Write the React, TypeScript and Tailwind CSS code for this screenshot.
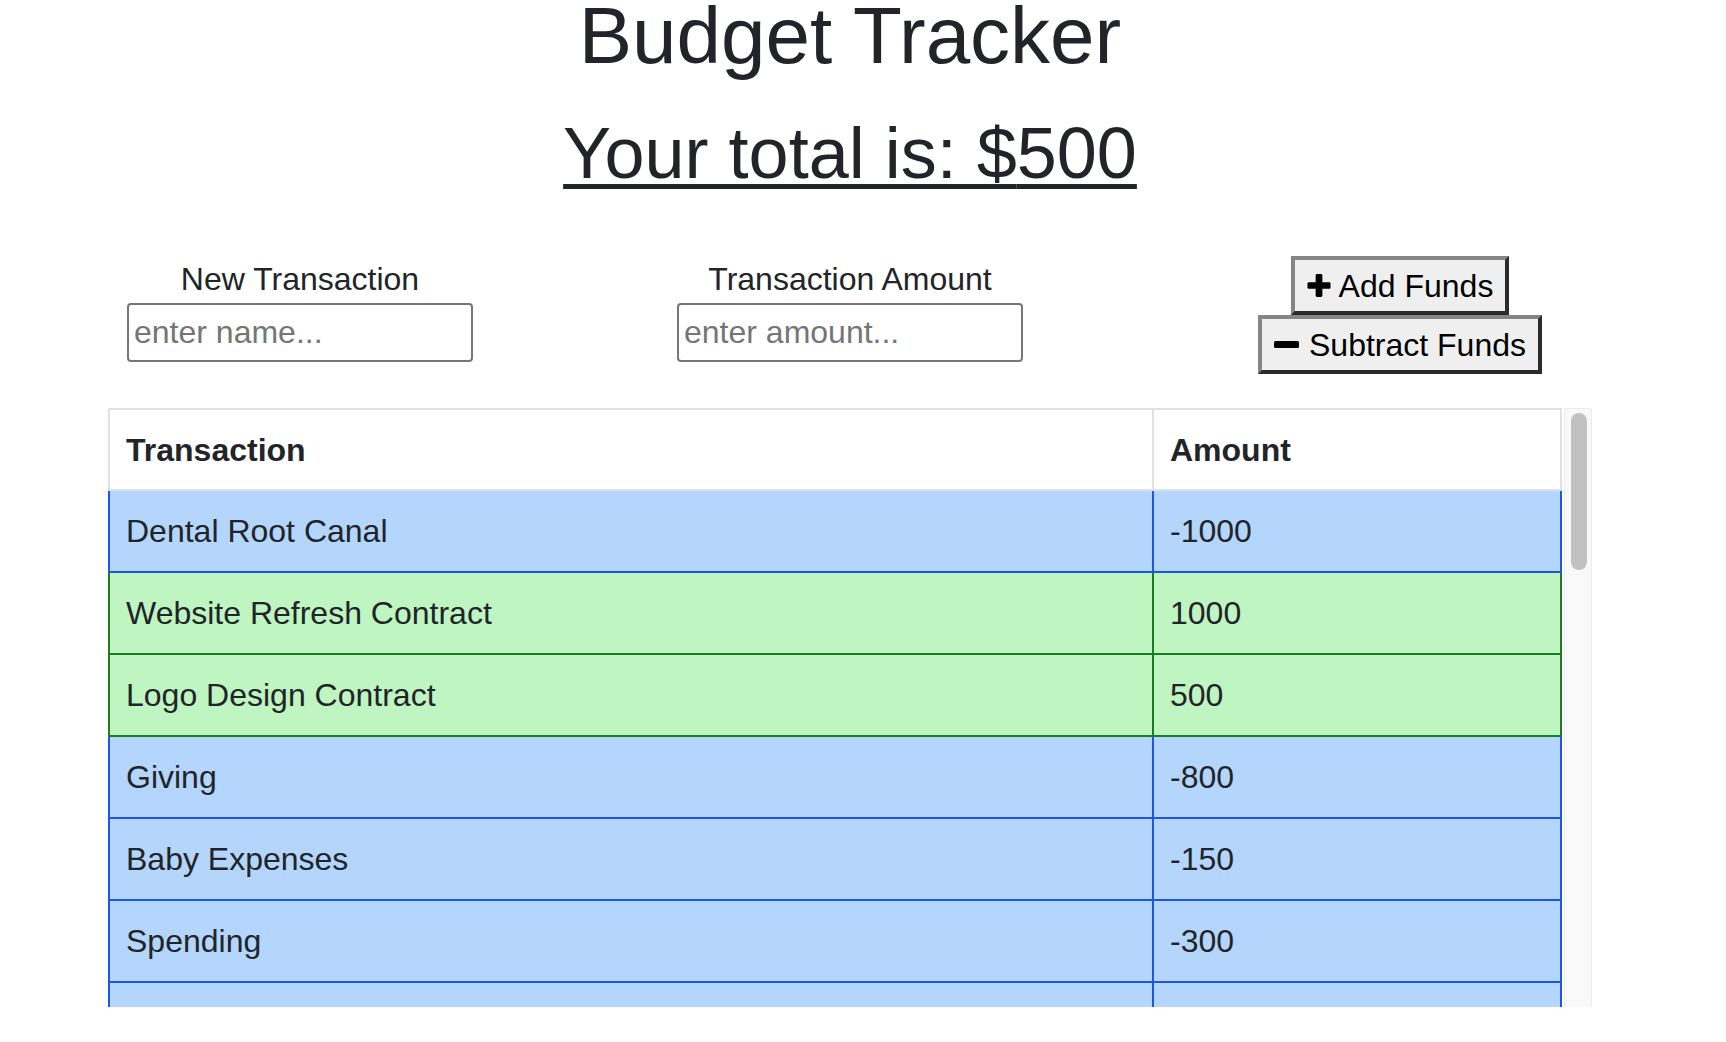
import { useState } from "react";

type Entry = { name: string; amount: number };

const entries: Entry[] = [
  { name: "Dental Root Canal", amount: -1000 },
  { name: "Website Refresh Contract", amount: 1000 },
  { name: "Logo Design Contract", amount: 500 },
  { name: "Giving", amount: -800 },
  { name: "Baby Expenses", amount: -150 },
  { name: "Spending", amount: -300 },
];

function PlusIcon() {
  return (
    <svg viewBox="0 0 24 24" className="h-[23px] w-[24px]" fill="currentColor">
      <rect x="0" y="8.5" width="24" height="7" rx="1.5" />
      <rect x="8.5" y="0" width="7" height="24" rx="1.5" />
    </svg>
  );
}

function MinusIcon() {
  return (
    <svg viewBox="0 0 25 7" className="h-[7px] w-[25px]" fill="currentColor">
      <rect x="0" y="0" width="25" height="7" rx="1.5" />
    </svg>
  );
}

function Row({ entry }: { entry?: Entry }) {
  const income = !!entry && entry.amount > 0;
  return (
    <div
      className={
        income
          ? "flex h-[82px] shrink-0 border-x-2 border-b-2 border-[#1c7c21] bg-[#bff5c1]"
          : "flex h-[82px] shrink-0 border-x-2 border-b-2 border-[#1b57e3] bg-[#b4d5fc]"
      }
    >
      <div
        className={
          income
            ? "flex w-[1044px] items-center border-r-2 border-[#1c7c21] px-[16px] leading-[48px]"
            : "flex w-[1044px] items-center border-r-2 border-[#1b57e3] px-[16px] leading-[48px]"
        }
      >
        {entry?.name}
      </div>
      <div className="flex flex-1 items-center px-[16px] leading-[48px]">{entry?.amount}</div>
    </div>
  );
}

export default function App() {
  const [name, setName] = useState("");
  const [amount, setAmount] = useState("");
  const total = 500;

  return (
    <div className="w-[1700px] font-['Liberation_Sans',Arial,sans-serif] text-[#212529]">
      <h1 className="text-center text-[80px] leading-[72px]">Budget Tracker</h1>
      <h2 className="mt-[38px] text-center text-[72px] leading-[86px]">
        <span className="underline decoration-[5px] underline-offset-[6px]">Your total is: ${total}</span>
      </h2>

      <div className="mx-[25px] mt-[60px] grid grid-cols-3 items-start text-[32px]">
        <div className="flex flex-col items-center">
          <label className="leading-[47px]">New Transaction</label>
          <input
            value={name}
            onChange={(e) => setName(e.target.value)}
            placeholder="enter name..."
            className="h-[59px] w-[346px] rounded-[4px] border-2 border-[#767676] bg-white px-[5px] text-[32px] outline-none placeholder:text-[#757575]"
          />
        </div>
        <div className="flex flex-col items-center">
          <label className="leading-[47px]">Transaction Amount</label>
          <input
            value={amount}
            onChange={(e) => setAmount(e.target.value)}
            placeholder="enter amount..."
            className="h-[59px] w-[346px] rounded-[4px] border-2 border-[#767676] bg-white px-[5px] text-[32px] outline-none placeholder:text-[#757575]"
          />
        </div>
        <div className="flex flex-col items-center text-black">
          <button className="flex h-[59px] items-center gap-[8px] border-[4px] border-t-[#858585] border-r-[#2b2b2b] border-b-[#2b2b2b] border-l-[#858585] bg-[#efefef] px-[12px]">
            <PlusIcon />
            <span>Add Funds</span>
          </button>
          <button className="flex h-[59px] items-center gap-[10px] border-[4px] border-t-[#858585] border-r-[#2b2b2b] border-b-[#2b2b2b] border-l-[#858585] bg-[#efefef] px-[12px]">
            <MinusIcon />
            <span>Subtract Funds</span>
          </button>
        </div>
      </div>

      <div className="mx-[108px] mt-[34px] flex h-[599px] text-[32px]">
        <div className="flex flex-1 flex-col overflow-hidden">
          <div className="flex h-[83px] shrink-0 border-2 border-[#dee2e6] bg-white font-bold">
            <div className="flex w-[1044px] items-center border-r-2 border-[#dee2e6] px-[16px] leading-[48px]">
              Transaction
            </div>
            <div className="flex flex-1 items-center px-[16px] leading-[48px]">Amount</div>
          </div>
          {entries.map((e) => (
            <Row key={e.name} entry={e} />
          ))}
          <Row />
        </div>
        <div className="ml-[2px] flex w-[28px] flex-col border-x border-t border-[#ececec] bg-[#f9f9f9]">
          <div className="ml-[6px] mt-[4px] h-[157px] w-[16px] rounded-full bg-[#c1c1c1]" />
        </div>
      </div>
    </div>
  );
}
